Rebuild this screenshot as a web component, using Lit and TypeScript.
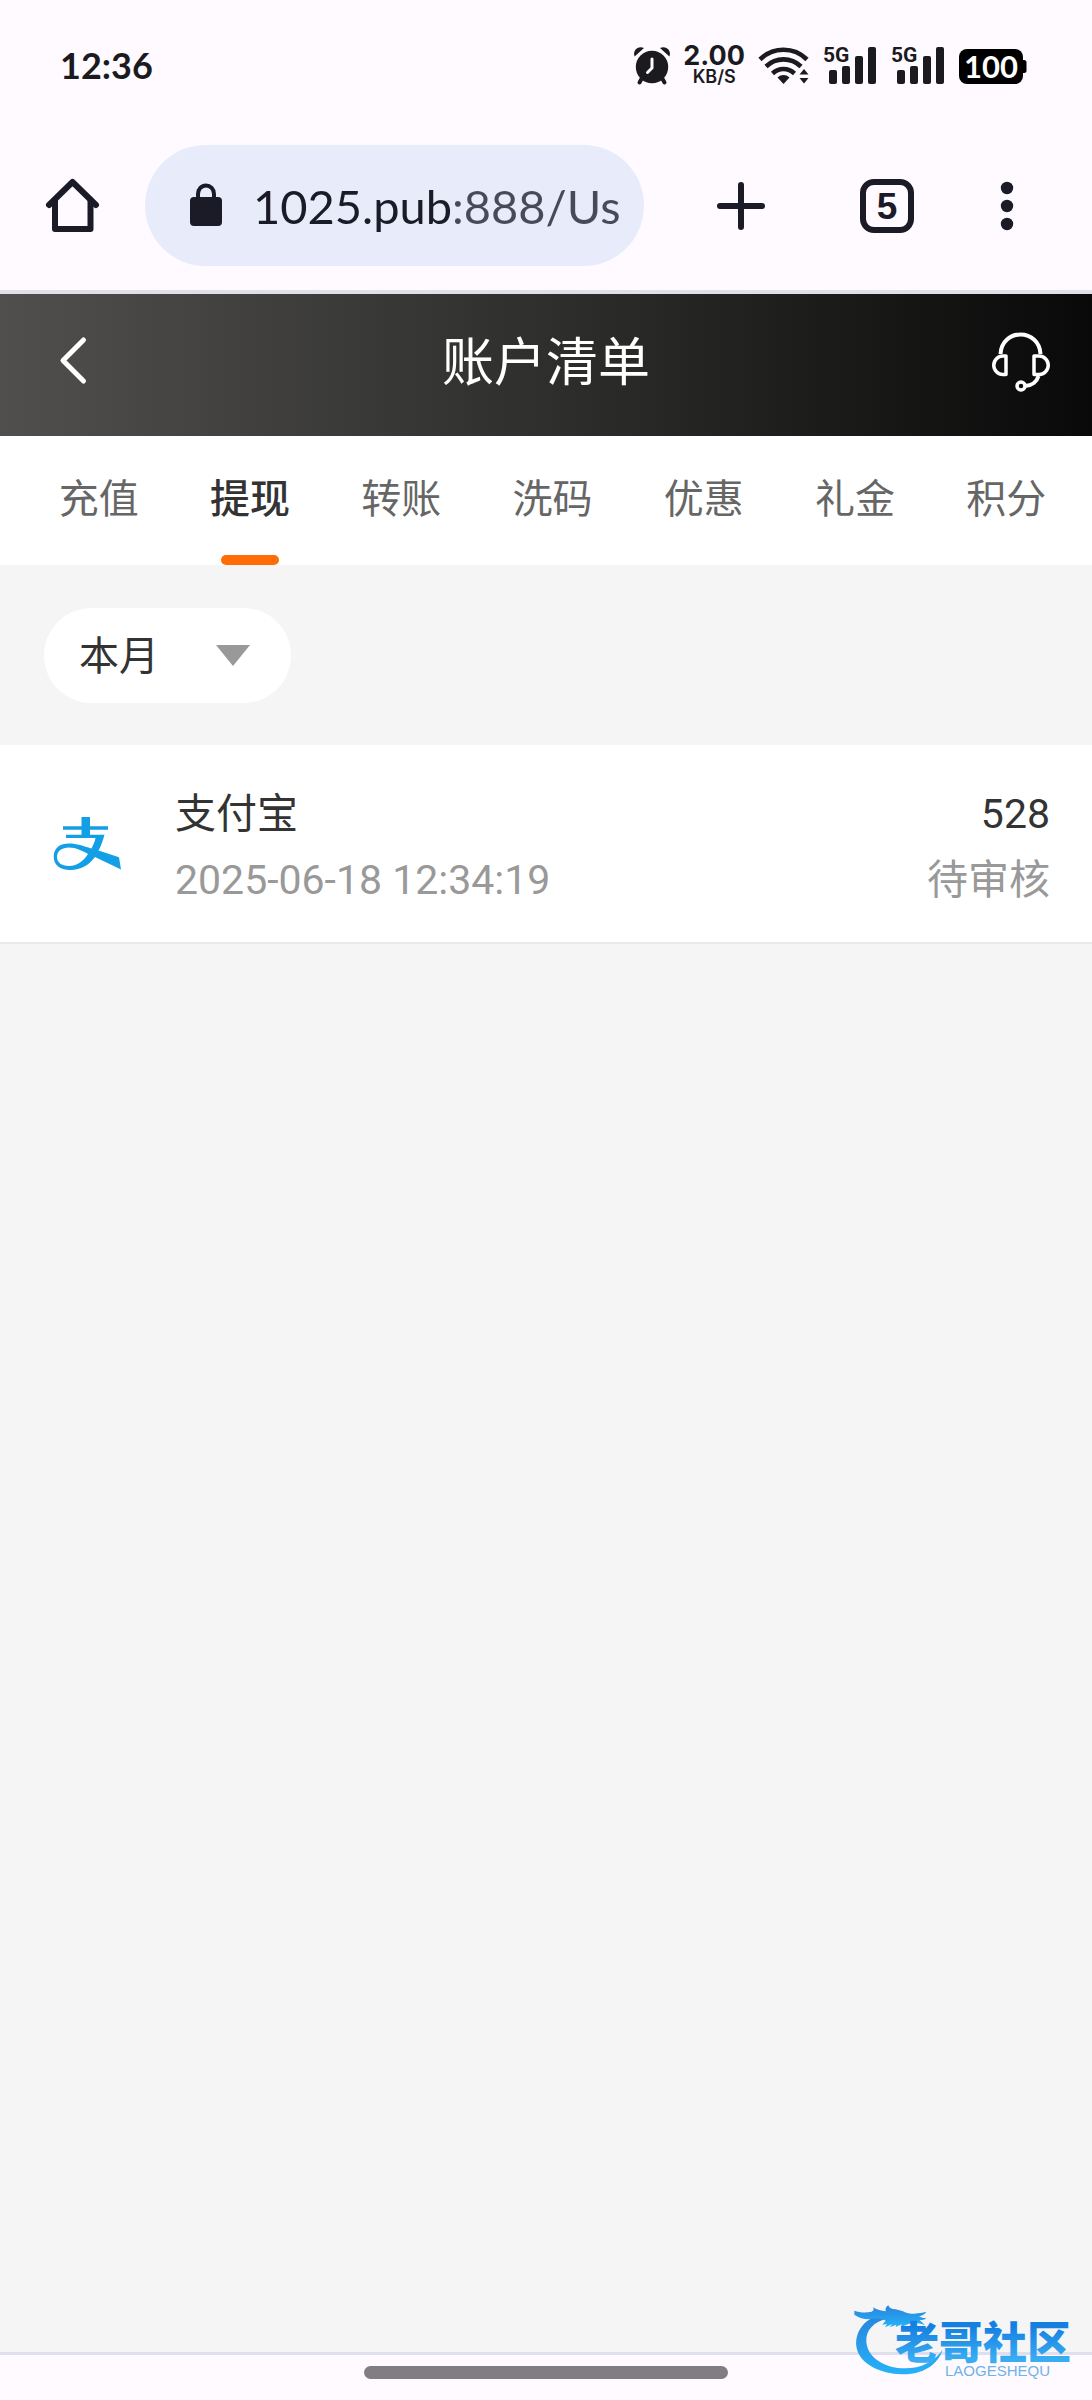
import { LitElement, html, css, svg } from "lit";
import { customElement, property, state } from "lit/decorators.js";

interface RecordItem {
  method: string;
  time: string;
  amount: string;
  status: string;
}

@customElement("status-bar")
class StatusBar extends LitElement {
  static styles = css`
    :host { display: block; }
    .bar {
      display: flex;
      align-items: center;
      height: 130px;
      box-sizing: border-box;
      padding: 0 66px 0 60px;
      color: #1b1a1e;
    }
    .time { flex: 1; font: 700 36px/44px Lato, sans-serif; }
    .icons { display: flex; align-items: center; gap: 12px; }
    .icons svg { display: block; overflow: visible; }
    .speed { display: flex; flex-direction: column; align-items: center; }
    .rate { font: 700 27px/24px Inter, sans-serif; }
    .unit { font: 600 18px/18px Inter, sans-serif; }
    .gen { font: 700 21px Roboto, sans-serif; }
    .level { font: 700 31px Lato, sans-serif; }
  `;

  private signal() {
    return html`<svg width="56" height="40" viewBox="0 0 56 40" fill="currentColor" role="img" aria-label="5G">
      <text class="gen" x="0" y="17">5G</text>
      <rect x="6" y="25" width="8" height="14" rx="2"></rect>
      <rect x="19" y="21" width="8" height="18" rx="2"></rect>
      <rect x="32" y="11" width="8" height="28" rx="2"></rect>
      <rect x="45" y="2" width="8" height="37" rx="2"></rect>
    </svg>`;
  }

  render() {
    return html`<div class="bar">
      <span class="time">12:36</span>
      <div class="icons">
        <svg width="38" height="40" viewBox="0 0 38 40" fill="currentColor" aria-hidden="true">
          <circle cx="19" cy="22" r="16.2"></circle>
          <path d="M1.6 11.4C-.6 5.800 4.600 .4 11 3Z"></path>
          <path d="M36.400 11.400C38.600 5.800 33.400 .4 27 3Z"></path>
          <path d="M9 33 6.500 37.500M29 33l2.500 4.500" stroke="currentColor" stroke-width="4" stroke-linecap="round"></path>
          <path d="M19 14v9l-4.500 4.500" fill="none" stroke="#fefaff" stroke-width="3" stroke-linecap="round"></path>
        </svg>
        <div class="speed"><span class="rate">2.00</span><span class="unit">KB/S</span></div>
        <svg width="54" height="40" viewBox="0 0 54 40" fill="none" stroke="currentColor" aria-hidden="true">
          <g stroke-width="4.600">
            <path d="M3 14.500C16 1.500 37 1.500 50 14.500"></path>
            <path d="M9 21.500C19 12 34 12 44 21.500"></path>
            <path d="M15.500 28.500C22 22.500 31 22.500 37.500 28.500"></path>
          </g>
          <path d="M20.500 32.500C24 29.200 29 29.200 32.500 32.500L26.500 39Z" fill="currentColor" stroke="none"></path>
          <path d="M42.500 29.500 47 24l4.500 5.500ZM42.500 33H51.500L47 38.500Z" fill="currentColor" stroke="none"></path>
        </svg>
        ${this.signal()}${this.signal()}
        <svg width="67" height="40" viewBox="0 0 67 40" role="img" aria-label="100%">
          <rect x="0" y="4" width="64" height="35" rx="8" fill="#000"></rect>
          <path d="M63 15h2a2.500 2.500 0 0 1 2.500 2.500v8a2.500 2.500 0 0 1-2.500 2.500h-2Z" fill="#000"></path>
          <text class="level" x="32" y="33" text-anchor="middle" fill="#fff">100</text>
        </svg>
      </div>
    </div>`;
  }
}

@customElement("browser-bar")
class BrowserBar extends LitElement {
  @property({ type: Number }) tabs = 5;

  static styles = css`
    :host { display: block; }
    .bar {
      display: flex;
      align-items: center;
      box-sizing: border-box;
      padding: 15px 57px 24px 44px;
      border-bottom: 4px solid #dfe0ea;
      color: #1a1b27;
    }
    button {
      display: block;
      flex: none;
      padding: 0;
      border: 0;
      background: none;
      color: inherit;
    }
    svg { display: block; }
    .address {
      display: flex;
      align-items: center;
      flex: 1;
      min-width: 0;
      height: 121px;
      box-sizing: border-box;
      margin-left: 43px;
      padding: 0 24px 0 44px;
      border-radius: 61px;
      background: #e8ecfa;
    }
    .address svg { flex: none; }
    .url {
      flex: 1;
      min-width: 0;
      height: 64px;
      margin: 0 0 0 30px;
      padding: 0;
      border: 0;
      outline: 0;
      font: 400 47px/64px Lato, sans-serif;
      color: #1a1b27;
      background: linear-gradient(90deg, #1a1b27 198px, #484a59 198px);
      -webkit-background-clip: text;
      background-clip: text;
      -webkit-text-fill-color: transparent;
    }
    .add { margin-left: 69px; }
    .switch { margin-left: 90px; }
    .more { margin-left: 64px; }
    .count { font: 700 37px "Liberation Sans", Arial, sans-serif; }
  `;

  render() {
    return html`<div class="bar">
      <button class="home" aria-label="Home">
        <svg width="58" height="58" viewBox="0 0 58 58" fill="none" stroke="currentColor" stroke-width="6" stroke-linecap="round" stroke-linejoin="round">
          <path d="M5 28 28.500 5 52 28"></path>
          <path d="M11 23v29h35.500V23"></path>
        </svg>
      </button>
      <div class="address">
        <svg width="34" height="46" viewBox="0 0 34 46" aria-hidden="true">
          <rect x="1" y="14" width="32" height="29" rx="4" fill="currentColor"></rect>
          <path d="M9 16V11a8 8.500 0 0 1 16 0v5" fill="none" stroke="currentColor" stroke-width="4"></path>
        </svg>
        <input class="url" type="text" aria-label="Address" spellcheck="false" value="1025.pub:888/User" />
      </div>
      <button class="add" aria-label="New tab">
        <svg width="56" height="56" viewBox="0 0 56 56" stroke="currentColor" stroke-width="6" stroke-linecap="round">
          <path d="M28 7v42M7 28h42"></path>
        </svg>
      </button>
      <button class="switch" aria-label="Tabs">
        <svg width="56" height="56" viewBox="0 0 56 56">
          <rect x="4" y="4" width="48" height="48" rx="11" fill="none" stroke="currentColor" stroke-width="6"></rect>
          <text class="count" x="28" y="41" text-anchor="middle" fill="currentColor">${this.tabs}</text>
        </svg>
      </button>
      <button class="more" aria-label="Menu">
        <svg width="56" height="56" viewBox="0 0 56 56" fill="currentColor">
          <circle cx="28" cy="10" r="6.200"></circle>
          <circle cx="28" cy="28" r="6.200"></circle>
          <circle cx="28" cy="46" r="6.200"></circle>
        </svg>
      </button>
    </div>`;
  }
}

@customElement("page-header")
class PageHeader extends LitElement {
  static styles = css`
    :host { display: block; }
    .header {
      display: grid;
      grid-template-columns: 1fr auto 1fr;
      align-items: center;
      height: 142px;
      box-sizing: border-box;
      padding: 0 40px 4px;
      color: #fff;
      background: linear-gradient(90deg, #504f4d 0%, #2d2d2b 52%, #090909 100%);
    }
    h1 { margin: 0; padding-bottom: 8px; font: 400 52px/64px "Noto Sans CJK SC", sans-serif; }
    button { padding: 0; border: 0; background: none; color: inherit; justify-self: start; }
    .service { justify-self: end; }
    svg { display: block; }
  `;

  render() {
    return html`<header class="header">
      <button aria-label="返回">
        <svg width="60" height="60" viewBox="0 0 60 60" fill="none" stroke="currentColor" stroke-width="5" stroke-linecap="round" stroke-linejoin="round">
          <path d="M43.500 7 23 27.500 43.500 48"></path>
        </svg>
      </button>
      <h1>账户清单</h1>
      <button class="service" aria-label="客服">
        <svg width="62" height="62" viewBox="0 0 62 62" fill="none" stroke="currentColor" stroke-width="3.500" stroke-linejoin="round">
          <path d="M10.500 22C11 10 20 2.500 30.500 2.500S50 10 50.500 22" stroke-width="4"></path>
          <path d="M16 24V42.500H13A9.200 9.200 0 0 1 13 24Z"></path>
          <path d="M44 24V42.500H49A9.200 9.200 0 0 0 49 24Z"></path>
          <path d="M48.500 44C47 49.500 42 53.500 35 54" stroke-width="4"></path>
          <circle cx="31" cy="54" r="4"></circle>
        </svg>
      </button>
    </header>`;
  }
}

@customElement("record-tabs")
class RecordTabs extends LitElement {
  @state() private active = 1;
  private labels = ["充值", "提现", "转账", "洗码", "优惠", "礼金", "积分"];

  static styles = css`
    :host { display: block; }
    .tabs {
      display: flex;
      padding: 0 10px 0 23px;
      background: #fff;
    }
    .tab {
      display: flex;
      flex: 1;
      flex-direction: column;
      align-items: center;
      justify-content: space-between;
      height: 129px;
      padding: 30px 0 0;
      border: 0;
      background: none;
      font: 400 40px/60px "Noto Sans CJK SC", sans-serif;
      color: #666;
    }
    .tab::after { content: ""; width: 58px; height: 10px; border-radius: 5px; }
    .tab[aria-selected="true"] { font-weight: 500; color: #333; }
    .tab[aria-selected="true"]::after { background: #ff6d08; }
  `;

  render() {
    return html`<div class="tabs" role="tablist">
      ${this.labels.map(
        (label, i) => html`<button
          class="tab"
          role="tab"
          aria-selected=${i === this.active ? "true" : "false"}
          @click=${() => (this.active = i)}
        >${label}</button>`
      )}
    </div>`;
  }
}

@customElement("record-list")
class RecordList extends LitElement {
  @property({ attribute: false }) items: RecordItem[] = [];

  static styles = css`
    :host { display: block; }
    .filter { padding: 43px 44px 42px; }
    .picker { display: grid; width: 247px; }
    .picker > * { grid-area: 1 / 1; }
    select {
      appearance: none;
      -webkit-appearance: none;
      height: 95px;
      padding: 0 0 6px 35px;
      border: 0;
      border-radius: 48px;
      background: #fff;
      font: 400 40px/60px "Noto Sans CJK SC", sans-serif;
      color: #333;
    }
    .arrow { place-self: center end; margin-right: 41px; pointer-events: none; }
    ul { margin: 0; padding: 0; list-style: none; }
    li {
      display: flex;
      align-items: center;
      height: 199px;
      box-sizing: border-box;
      padding: 0 42px 0 52px;
      border-bottom: 2px solid #e9e9e9;
      background: #fff;
      font: 400 41px/66px Roboto, "Noto Sans CJK SC", sans-serif;
    }
    .logo { flex: none; margin-right: 53px; }
    .info { flex: 1; padding-top: 6px; }
    .result { padding-top: 6px; text-align: right; }
    .main { color: #333; }
    .sub { color: #999; }
  `;

  render() {
    return html`<div class="filter">
        <div class="picker">
          <select aria-label="时间范围">
            <option>本月</option>
            <option>上月</option>
          </select>
          <svg class="arrow" width="34" height="21" viewBox="0 0 34 21" aria-hidden="true">
            <path d="M0 0H34L17 21Z" fill="#999"></path>
          </svg>
        </div>
      </div>
      <ul>
        ${this.items.map(
          (r) => html`<li>
            <svg class="logo" width="70" height="54" viewBox="-1 0 70 54" aria-hidden="true">
              <path fill="#129fe6" fill-rule="evenodd" d="M51.500 17.700C49.500 25 47.500 30 45.500 33.500L66 40.300 68 52.500 42 40C36 48 28 53 17 53 7 53 .7 48 .7 39.500.7 31 7 26.500 16 26.500c8 0 14 2.500 22.500 5C40 28 42 24.500 42.500 21H13V17.700H28.500V12.700H10V9.300H28.500V0H37V9.300H55V12.700H37V17.700ZM4 40C4 45 8 49 16 49c9 0 15-6 19-12C30 34 23 30.500 16 30.500 9 30.500 4 34 4 40Z"></path>
            </svg>
            <div class="info">
              <div class="main">${r.method}</div>
              <div class="sub">${r.time}</div>
            </div>
            <div class="result">
              <div class="main">${r.amount}</div>
              <div class="sub">${r.status}</div>
            </div>
          </li>`
        )}
      </ul>`;
  }
}

@customElement("community-mark")
class CommunityMark extends LitElement {
  static styles = css`
    :host { display: block; }
    svg { display: block; overflow: visible; }
    .name { font: 900 44px "Noto Sans CJK SC", sans-serif; }
    .latin { font: 400 15px "Liberation Sans", Arial, sans-serif; }
  `;

  private dragon() {
    return svg`<g transform="scale(.3333) translate(-95 -70)" fill="url(#wave)">
      <path d="M192 94C130 110 104 150 108 194c6 50 70 84 138 84 62 0 106-28 121-74-24 36-66 56-112 56-64 0-114-34-117-80-2-34 22-60 66-70Z"></path>
      <path d="M102 87c16 6 34 7 52 3 6-3 8-7 4-13 14 8 24 11 38 12-2-8 2-14 8-18 2 8 10 12 22 12l22 6c10 6 22 9 34 7 14-2 24-2 36-6-4 8-12 12-22 14 6 4 14 6 22 6-4 4-12 6-20 5l16 15c-18-6-34-8-50-3l-22 9 2-8-18 8 2-7-20 8 8-10-22 10 6-10-14 2 10-12c-10-6-24-8-40-6-16 4-36 0-54-12Z"></path>
    </g>`;
  }

  render() {
    return html`<svg width="226" height="76" viewBox="0 0 226 76" role="img" aria-label="老哥社区">
      <defs>
        <linearGradient id="wave" x1="0" y1="0" x2="0" y2="1">
          <stop offset="0" stop-color="#2a83dc"></stop>
          <stop offset="1" stop-color="#25b2f8"></stop>
        </linearGradient>
        <linearGradient id="ink" x1="0" y1="0" x2="0" y2="1">
          <stop offset="0.300" stop-color="#1680e2"></stop>
          <stop offset="0.800" stop-color="#39adf2"></stop>
        </linearGradient>
      </defs>
      ${this.dragon()}
      <text class="name" x="43" y="54" fill="url(#ink)">老哥社区</text>
      <text class="latin" x="93" y="71" fill="#6fb2ea">LAOGESHEQU</text>
    </svg>`;
  }
}

@customElement("app-root")
class AppRoot extends LitElement {
  private records: RecordItem[] = [
    { method: "支付宝", time: "2025-06-18 12:34:19", amount: "528", status: "待审核" },
  ];

  static styles = css`
    :host {
      display: flex;
      flex-direction: column;
      position: relative;
      min-height: 100vh;
      background: #fefaff;
      font-family: Roboto, "Noto Sans CJK SC", sans-serif;
    }
    main { flex: 1; background: #f5f5f5; }
    .gesture {
      display: flex;
      justify-content: center;
      height: 48px;
      box-sizing: border-box;
      padding-top: 11px;
      border-top: 3px solid #dfdfed;
    }
    .handle { width: 33.3%; height: 13px; border-radius: 7px; background: #807e81; }
    .mark { position: absolute; right: 14px; bottom: 19px; }
  `;

  render() {
    return html`<status-bar></status-bar>
      <browser-bar .tabs=${5}></browser-bar>
      <page-header></page-header>
      <main>
        <record-tabs></record-tabs>
        <record-list .items=${this.records}></record-list>
      </main>
      <div class="gesture"><div class="handle"></div></div>
      <community-mark class="mark"></community-mark>`;
  }
}
